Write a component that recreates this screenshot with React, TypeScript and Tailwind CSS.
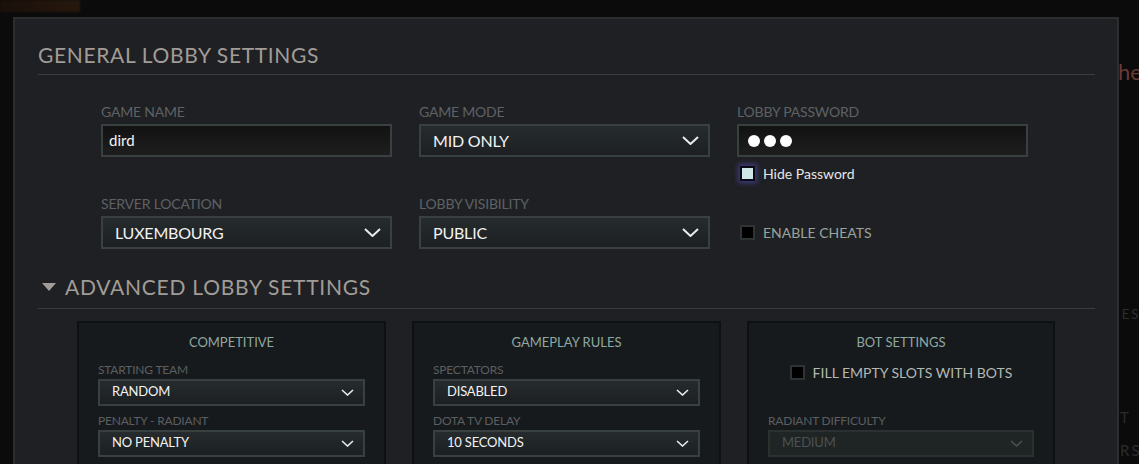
import React from 'react';

const font = { fontFamily: 'Lato, "Noto Sans", sans-serif' };

function Chevron({ small = false, dim = false }: { small?: boolean; dim?: boolean }) {
  const w = small ? 13 : 17;
  const h = small ? 7 : 9;
  return (
    <svg width={w} height={h} viewBox={`0 0 ${w} ${h}`} className="shrink-0">
      <polyline
        points={`1,1 ${w / 2},${h - 1} ${w - 1},1`}
        fill="none"
        stroke={dim ? '#4a5150' : '#e8ecea'}
        strokeWidth={small ? 1.6 : 2}
      />
    </svg>
  );
}

function Label({ children }: { children: React.ReactNode }) {
  return <div className="text-[14px] leading-[16px] text-[#5d6265] tracking-[-0.2px] mb-[4px]">{children}</div>;
}

function BigSelect({ value }: { value: string }) {
  return (
    <div className="h-[33px] border-2 border-[#394140] bg-gradient-to-b from-[#262b2d] to-[#1c2022] flex items-center justify-between pl-[12px] pr-[9px]">
      <span className="text-[16px] text-[#f2f2f2] tracking-[-0.2px]">{value}</span>
      <Chevron />
    </div>
  );
}

function SmallSelect({ value, dim = false }: { value: string; dim?: boolean }) {
  return (
    <div
      className={`h-[27px] border-2 flex items-center justify-between pl-[12px] pr-[9px] ${
        dim ? 'border-[#2b3130] bg-[#1f2425]' : 'border-[#394140] bg-gradient-to-b from-[#262b2d] to-[#1c2022]'
      }`}
    >
      <span className={`text-[13px] tracking-[-0.2px] ${dim ? 'text-[#4b5251]' : 'text-[#f2f2f2]'}`}>{value}</span>
      <Chevron small dim={dim} />
    </div>
  );
}

function SmallLabel({ children }: { children: React.ReactNode }) {
  return <div className="text-[12px] leading-[14px] text-[#5a5f61] tracking-[-0.2px] mb-[2px]">{children}</div>;
}

function Card({ title, children }: { title: string; children: React.ReactNode }) {
  return (
    <div className="h-[160px] border-2 border-[#0e1011] bg-[#171a1c] px-[19px] pt-[10px]">
      <div className="text-center text-[13px] text-[#8fa8a2] mb-[10px]">{title}</div>
      {children}
    </div>
  );
}

export default function App() {
  return (
    <div className="h-[464px] w-[1139px] overflow-hidden bg-[#0b0b0b] relative" style={font}>
      {/* background glimpses */}
      <div className="absolute left-0 top-0 h-[12px] w-[80px] bg-gradient-to-r from-[#24140a] to-[#3a210f] opacity-60 blur-[1px]" />
      <div className="absolute left-[1118px] top-[58px] text-[22px] leading-[28px] text-[#6a3a36]">he</div>
      <div className="absolute left-[1116px] top-[306px] text-[13px] leading-[16px] tracking-[2px] text-[#2c2f30]">IES</div>
      <div className="absolute left-[1120px] top-[408px] text-[15px] leading-[18px] tracking-[2px] text-[#2a2d2e]">T</div>
      <div className="absolute left-[1120px] top-[441px] text-[15px] leading-[18px] tracking-[2px] text-[#2a2d2e]">RS</div>

      <div className="pl-[13px] pt-[17px]">
        <div className="relative w-[1106px] h-[460px] bg-[#1f2023] border-t-2 border-l-2 border-r-2 border-[#2a2e2f] pl-[23px] pr-[22px]">
          {/* General */}
          <div className="pt-[23px] text-[21px] leading-[26px] tracking-[0.65px] text-[#a19c97]">GENERAL LOBBY SETTINGS</div>
          <div className="mt-[6px] h-px bg-[#3a3c3e]" />

          <div className="pl-[63px] pt-[29px] grid grid-cols-[291px_291px_291px] gap-x-[27px]">
            <div>
              <Label>GAME NAME</Label>
              <div className="h-[33px] border-2 border-[#394140] bg-gradient-to-b from-[#121212] to-[#1e1e1e] flex items-center pl-[6px]">
                <span className="text-[15px] text-[#f4f4f4]">dird</span>
              </div>
            </div>
            <div>
              <Label>GAME MODE</Label>
              <BigSelect value="MID ONLY" />
            </div>
            <div>
              <Label>LOBBY PASSWORD</Label>
              <div className="h-[33px] border-2 border-[#394140] bg-gradient-to-b from-[#121212] to-[#1e1e1e] flex items-center pl-[9px] gap-[4px]">
                <span className="w-[12px] h-[12px] rounded-full bg-white" />
                <span className="w-[12px] h-[12px] rounded-full bg-white" />
                <span className="w-[12px] h-[12px] rounded-full bg-white" />
              </div>
              <div className="mt-[6px] ml-[3px] flex items-center gap-[8px]">
                <span className="w-[15px] h-[15px] border-2 border-[#0a0a14] bg-[#cfe6e6] shadow-[0_0_5px_2px_rgba(90,80,200,0.55)]" />
                <span className="text-[14px] text-[#e6e6e6]">Hide Password</span>
              </div>
            </div>

            <div className="mt-[12px]">
              <Label>SERVER LOCATION</Label>
              <BigSelect value="LUXEMBOURG" />
            </div>
            <div className="mt-[12px]">
              <Label>LOBBY VISIBILITY</Label>
              <BigSelect value="PUBLIC" />
            </div>
            <div className="mt-[12px] pt-[26px] pl-[3px] flex items-center gap-[8px] h-fit">
              <span className="w-[15px] h-[15px] border-2 border-[#2e3433] bg-[#000]" />
              <span className="text-[14px] text-[#9aa29d]">ENABLE CHEATS</span>
            </div>
          </div>

          {/* Advanced */}
          <div className="mt-[25px] flex items-center gap-[9px]">
            <svg width="14" height="9" viewBox="0 0 14 9" className="ml-[4px]">
              <polygon points="0,0 14,0 7,8" fill="#a19c97" />
            </svg>
            <span className="text-[21px] leading-[26px] tracking-[0.75px] text-[#a19c97]">ADVANCED LOBBY SETTINGS</span>
          </div>
          <div className="mt-[8px] h-px bg-[#3a3c3e]" />

          <div className="mt-[12px] ml-[39px] grid grid-cols-[309px_309px_308px] gap-x-[26px]">
            <Card title="COMPETITIVE">
              <SmallLabel>STARTING TEAM</SmallLabel>
              <SmallSelect value="RANDOM" />
              <div className="mt-[8px]">
                <SmallLabel>PENALTY - RADIANT</SmallLabel>
                <SmallSelect value="NO PENALTY" />
              </div>
            </Card>
            <Card title="GAMEPLAY RULES">
              <SmallLabel>SPECTATORS</SmallLabel>
              <SmallSelect value="DISABLED" />
              <div className="mt-[8px]">
                <SmallLabel>DOTA TV DELAY</SmallLabel>
                <SmallSelect value="10 SECONDS" />
              </div>
            </Card>
            <Card title="BOT SETTINGS">
              <div className="-mt-[1px] flex items-center justify-center gap-[8px]">
                <span className="w-[15px] h-[15px] border-2 border-[#2e3433] bg-[#000]" />
                <span className="text-[14px] text-[#b3b8b3]">FILL EMPTY SLOTS WITH BOTS</span>
              </div>
              <div className="mt-[31px]">
                <SmallLabel>RADIANT DIFFICULTY</SmallLabel>
                <SmallSelect value="MEDIUM" dim />
              </div>
            </Card>
          </div>
        </div>
      </div>
    </div>
  );
}
